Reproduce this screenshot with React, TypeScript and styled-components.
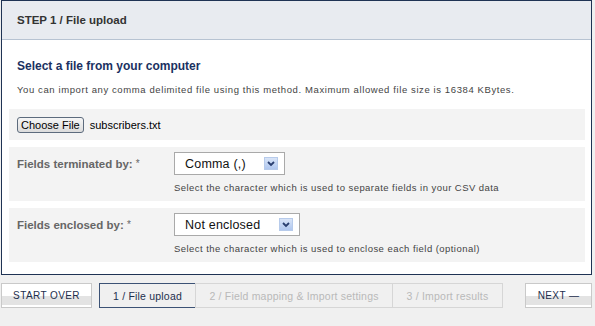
import React from 'react';
import styled, { createGlobalStyle } from 'styled-components';

const GlobalStyle = createGlobalStyle`
  body {
    margin: 0;
    background: #f0f0f0;
    font-family: 'Liberation Sans', Arial, sans-serif;
  }
`;

const Page = styled.div`
  width: 595px;
  height: 326px;
  padding-left: 1px;
  box-sizing: border-box;
`;

const Panel = styled.section`
  width: 591px;
  height: 275px;
  border: 1px solid #1f3354;
  background: #fff;
  box-sizing: border-box;
  display: flex;
  flex-direction: column;
`;

const Header = styled.header`
  height: 39px;
  flex-shrink: 0;
  background: #e8ebf0;
  border-bottom: 1px solid #b7c3d2;
  box-sizing: border-box;
  display: flex;
  align-items: center;
  padding: 0 15px 1px;
`;

const Heading = styled.h1`
  margin: 0;
  font-size: 11.5px;
  font-weight: 700;
  color: #333;
`;

const Body = styled.main`
  padding: 0 6px 0 7px;
  display: flex;
  flex-direction: column;
`;

const Title = styled.h2`
  margin: 18px 0 0 8px;
  font-size: 12px;
  line-height: 16px;
  font-weight: 700;
  color: #1b3161;
`;

const Note = styled.p`
  margin: 10px 0 0 8px;
  font-size: 9.5px;
  line-height: 12px;
  letter-spacing: 0.6px;
  color: #444;
`;

const Row = styled.div<{ $tall?: boolean }>`
  background: #f3f3f3;
  height: ${p => (p.$tall ? 54 : 31)}px;
  margin-top: ${p => (p.$tall ? 7 : 13)}px;
  padding-left: 8px;
  box-sizing: border-box;
  display: flex;
  align-items: ${p => (p.$tall ? 'flex-start' : 'center')};
`;

const FileButton = styled.button`
  font-family: 'Liberation Sans', Arial, sans-serif;
  font-size: 11px;
  height: 16px;
  padding: 0 3px;
  border: 1px solid #5d6b7d;
  border-radius: 3px;
  background: linear-gradient(#f6f6f6, #dcdcdc);
  color: #000;
  line-height: 13px;
  margin-top: 1px;
`;

const FileName = styled.span`
  font-size: 11px;
  color: #000;
  margin-left: 6px;
  margin-top: 1px;
`;

const Label = styled.label`
  width: 157px;
  flex-shrink: 0;
  font-size: 11.5px;
  font-weight: 700;
  color: #666;
  margin-top: 11px;

  & span {
    font-weight: 400;
    font-size: 10px;
    vertical-align: top;
  }
`;

const Field = styled.div`
  display: flex;
  flex-direction: column;
  padding-top: 5px;
`;

const Select = styled.div<{ $width: number }>`
  width: ${p => p.$width}px;
  height: 23px;
  border: 1px solid #a9a9a9;
  background: #fff;
  box-sizing: border-box;
  display: flex;
  align-items: center;
  justify-content: space-between;
  padding: 0 6px 0 10px;
  font-size: 12.5px;
  letter-spacing: 0.2px;
  color: #111;
`;

const Hint = styled.div`
  margin-top: 7px;
  font-size: 9.5px;
  letter-spacing: 0.45px;
  color: #444;
`;

const Footer = styled.footer`
  margin-top: 8px;
  display: flex;
  align-items: center;
`;

const ActionButton = styled.div<{ $width: number }>`
  width: ${p => p.$width}px;
  height: 25px;
  border: 1px solid #c9c9c9;
  box-sizing: border-box;
  background: linear-gradient(#fff 0, #fff 52%, #e3e3e3 52%, #e3e3e3 92%, #fff 92%);
  display: flex;
  align-items: center;
  justify-content: center;
  font-size: 10px;
  letter-spacing: 0.4px;
  color: #1d2f4d;
`;

const Steps = styled.nav`
  display: flex;
  margin-left: 7px;
  margin-right: 22px;
`;

const Step = styled.div<{ $width: number; $active?: boolean }>`
  width: ${p => p.$width}px;
  height: 25px;
  box-sizing: border-box;
  border: 1px solid ${p => (p.$active ? '#3c5275' : '#d6d6d6')};
  margin-left: ${p => (p.$active ? 0 : -1)}px;
  display: flex;
  align-items: center;
  justify-content: center;
  font-size: 10.5px;
  letter-spacing: 0.2px;
  color: ${p => (p.$active ? '#1d2f4d' : '#b9b9b9')};
`;

const Arrow = () => (
  <svg width="14" height="13" viewBox="0 0 14 13">
    <defs>
      <linearGradient id="ag" x1="0" y1="0" x2="0" y2="1">
        <stop offset="0" stopColor="#dbe6f8" />
        <stop offset="1" stopColor="#aec6ef" />
      </linearGradient>
    </defs>
    <rect x="0.5" y="0.5" width="13" height="12" fill="url(#ag)" stroke="#b7cbeb" />
    <path d="M4 5 L7 8 L10 5" fill="none" stroke="#2a3f70" strokeWidth="1.8" />
  </svg>
);

const App = () => {
  return (
    <Page>
      <GlobalStyle />
      <Panel>
        <Header>
          <Heading>STEP 1 / File upload</Heading>
        </Header>
        <Body>
          <Title>Select a file from your computer</Title>
          <Note>
            You can import any comma delimited file using this method. Maximum allowed file size is 16384 KBytes.
          </Note>
          <Row>
            <FileButton>Choose File</FileButton>
            <FileName>subscribers.txt</FileName>
          </Row>
          <Row $tall>
            <Label>
              Fields terminated by: <span>*</span>
            </Label>
            <Field>
              <Select $width={111}>
                Comma (,)
                <Arrow />
              </Select>
              <Hint>Select the character which is used to separate fields in your CSV data</Hint>
            </Field>
          </Row>
          <Row $tall>
            <Label>
              Fields enclosed by: <span>*</span>
            </Label>
            <Field>
              <Select $width={126}>
                Not enclosed
                <Arrow />
              </Select>
              <Hint>Select the character which is used to enclose each field (optional)</Hint>
            </Field>
          </Row>
        </Body>
      </Panel>
      <Footer>
        <ActionButton $width={91}>START OVER</ActionButton>
        <Steps>
          <Step $width={97} $active>
            1 / File upload
          </Step>
          <Step $width={198}>2 / Field mapping &amp; Import settings</Step>
          <Step $width={111}>3 / Import results</Step>
        </Steps>
        <ActionButton $width={67}>NEXT —</ActionButton>
      </Footer>
    </Page>
  );
};

export default App;
